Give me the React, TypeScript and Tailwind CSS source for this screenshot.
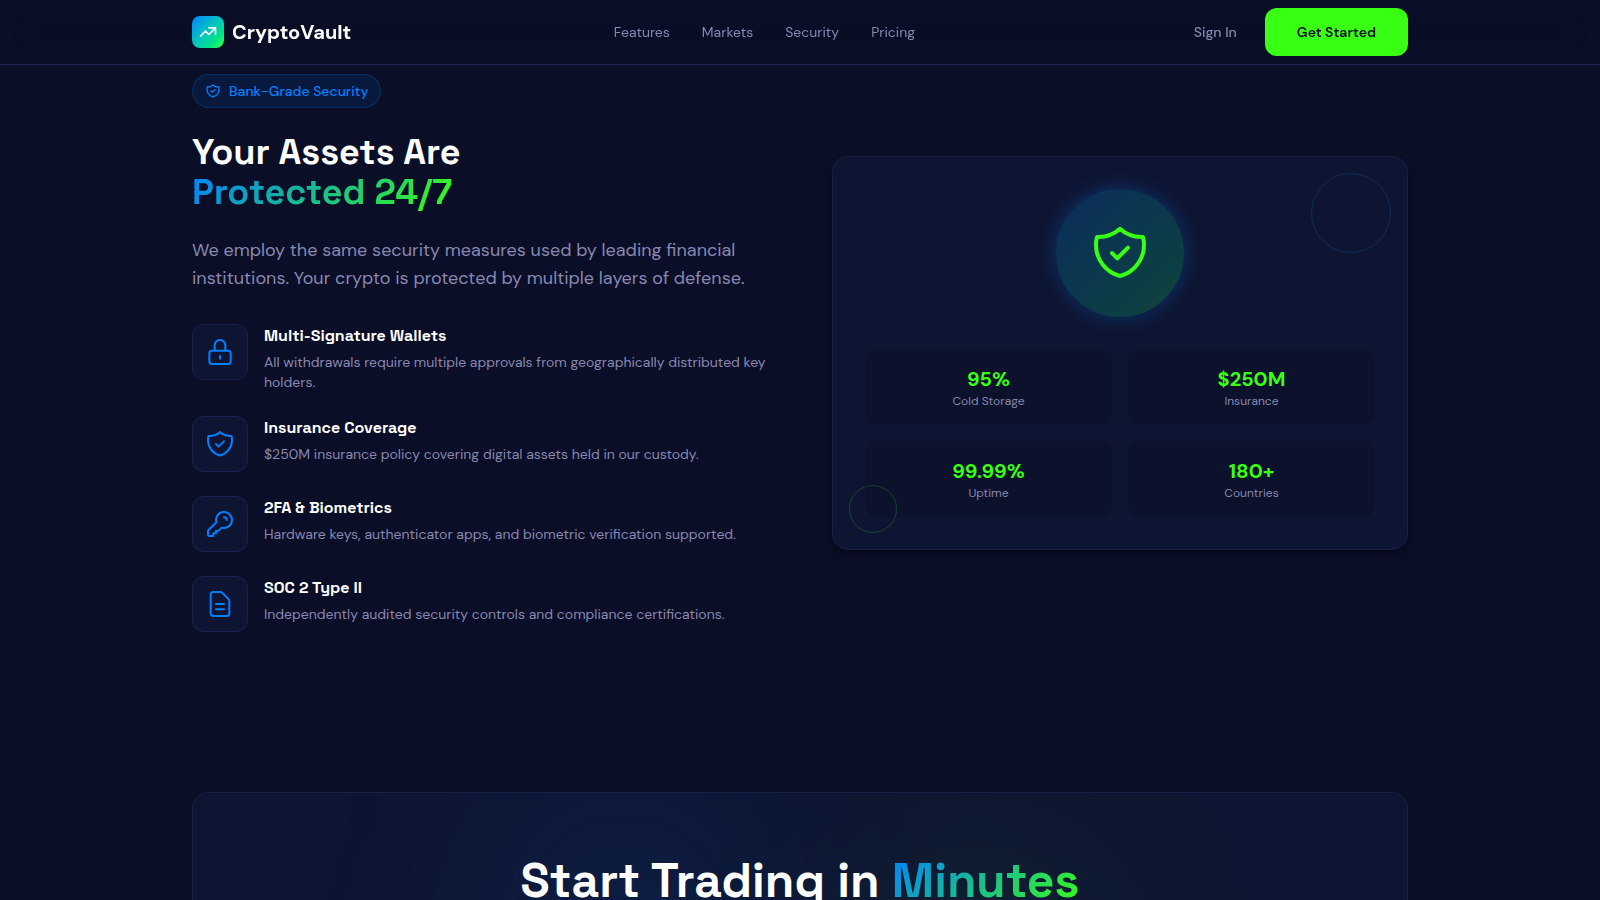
const icons = {
  trending: "M13 7h8m0 0v8m0-8l-8 8-4-4-6 6",
  lock: "M12 15v2m-6 4h12a2 2 0 002-2v-6a2 2 0 00-2-2H6a2 2 0 00-2 2v6a2 2 0 002 2zm10-10V7a4 4 0 00-8 0v4h8z",
  shield:
    "M9 12l2 2 4-4m5.618-4.016A11.955 11.955 0 0112 2.944a11.955 11.955 0 01-8.618 3.04A12.02 12.02 0 003 9c0 5.591 3.824 10.29 9 11.622 5.176-1.332 9-6.03 9-11.622 0-1.042-.133-2.052-.382-3.016z",
  key: "M15 7a2 2 0 012 2m4 0a6 6 0 01-7.743 5.743L11 17H9v2H7v2H4a1 1 0 01-1-1v-2.586a1 1 0 01.293-.707l5.964-5.964A6 6 0 1121 9z",
  document:
    "M9 12h6m-6 4h6m2 5H7a2 2 0 01-2-2V5a2 2 0 012-2h5.586a1 1 0 01.707.293l5.414 5.414a1 1 0 01.293.707V19a2 2 0 01-2 2z",
};

type IconName = keyof typeof icons;

function Icon({ name, className, strokeWidth = 2 }: { name: IconName; className: string; strokeWidth?: number }) {
  return (
    <svg className={className} fill="none" viewBox="0 0 24 24" stroke="currentColor" strokeWidth={strokeWidth} aria-hidden="true">
      <path strokeLinecap="round" strokeLinejoin="round" d={icons[name]} />
    </svg>
  );
}

const navLinks = ["Features", "Markets", "Security", "Pricing"];

const features: { icon: IconName; title: string; description: string }[] = [
  {
    icon: "lock",
    title: "Multi-Signature Wallets",
    description: "All withdrawals require multiple approvals from geographically distributed key holders.",
  },
  {
    icon: "shield",
    title: "Insurance Coverage",
    description: "$250M insurance policy covering digital assets held in our custody.",
  },
  {
    icon: "key",
    title: "2FA & Biometrics",
    description: "Hardware keys, authenticator apps, and biometric verification supported.",
  },
  {
    icon: "document",
    title: "SOC 2 Type II",
    description: "Independently audited security controls and compliance certifications.",
  },
];

const stats = [
  { value: "95%", label: "Cold Storage" },
  { value: "$250M", label: "Insurance" },
  { value: "99.99%", label: "Uptime" },
  { value: "180+", label: "Countries" },
];

function Header() {
  return (
    <header className="fixed inset-x-0 top-0 z-50 border-b border-[#1e2454] bg-[#0a0e27]/90 backdrop-blur-xl">
      <div className="max-w-7xl mx-auto px-8 h-16 flex items-center justify-between">
        <a href="#" className="flex items-center gap-2">
          <span className="w-8 h-8 rounded-lg bg-linear-to-br from-[#0080ff] to-[#39ff14] flex items-center justify-center">
            <Icon name="trending" className="w-5 h-5 text-white" />
          </span>
          <span className="text-xl font-bold text-white">CryptoVault</span>
        </a>

        <nav className="flex items-center gap-8">
          {navLinks.map((link) => (
            <a key={link} href={`#${link.toLowerCase()}`} className="text-sm text-[#8888b0] hover:text-white transition-colors">
              {link}
            </a>
          ))}
        </nav>

        <div className="flex items-center gap-3">
          <button type="button" className="px-4 py-2 text-sm font-medium text-[#8888b0] hover:text-white transition-colors">
            Sign In
          </button>
          <button type="button" className="h-12 px-8 rounded-xl bg-[#39ff14] text-sm font-semibold text-[#0a0e27]">
            Get Started
          </button>
        </div>
      </div>
    </header>
  );
}

function SecurityCard() {
  return (
    <div className="relative rounded-2xl border border-[#191f46] bg-[#0e1532] p-8 shadow-[0_4px_6px_rgba(0,0,0,0.3)]">
      <div className="w-32 h-32 mx-auto mb-8 rounded-full bg-linear-to-br from-[#0080ff]/20 to-[#39ff14]/20 shadow-[0_0_20px_rgba(0,128,255,0.3)] flex items-center justify-center">
        <Icon name="shield" className="w-16 h-16 text-[#39ff14]" strokeWidth={1.5} />
      </div>

      <dl className="grid grid-cols-2 gap-4">
        {stats.map((stat) => (
          <div key={stat.label} className="flex flex-col-reverse rounded-xl bg-[#0c112c] p-4 text-center">
            <dt className="text-xs text-[#8888b0]">{stat.label}</dt>
            <dd className="text-xl font-bold text-[#39ff14]">{stat.value}</dd>
          </div>
        ))}
      </dl>

      {/* Decorative rings */}
      <div className="absolute top-4 right-4 w-20 h-20 rounded-full border border-[#0080ff]/20"></div>
      <div className="absolute bottom-4 left-4 w-12 h-12 rounded-full border border-[#39ff14]/20"></div>
    </div>
  );
}

export default function App() {
  return (
    <div className="min-h-screen bg-[#0a0e27] font-['DM_Sans',Inter,sans-serif] text-white antialiased">
      <Header />

      <main className="max-w-7xl mx-auto px-8 pt-[74px] pb-20">
        <section id="security" className="grid grid-cols-2 gap-16 items-center pb-20">
          <div>
            <div className="inline-flex items-center gap-2 px-3 py-1.5 mb-6 rounded-full border border-[#0080ff]/20 bg-[#0080ff]/10 align-top text-sm font-medium text-[#0080ff]">
              <Icon name="shield" className="w-4 h-4" />
              Bank-Grade Security
            </div>

            <h2 className="mb-6 font-['Space_Grotesk',Inter,sans-serif] text-4xl font-bold">
              Your Assets Are
              <br />
              <span className="bg-[linear-gradient(135deg,#0080ff,#39ff14)] bg-clip-text text-transparent">Protected 24/7</span>
            </h2>

            <p className="mb-8 text-lg leading-7 text-[#8888b0]">
              We employ the same security measures used by leading financial institutions. Your crypto is protected by
              multiple layers of defense.
            </p>

            <ul className="space-y-6">
              {features.map((feature) => (
                <li key={feature.title} className="flex items-start gap-4">
                  <div className="w-14 h-14 shrink-0 rounded-xl border border-[#1c2250] bg-[#0e1532] flex items-center justify-center">
                    <Icon name={feature.icon} className="w-8 h-8 text-[#0080ff]" strokeWidth={1.5} />
                  </div>
                  <div>
                    <h3 className="mb-1 font-['Space_Grotesk',Inter,sans-serif] font-semibold">{feature.title}</h3>
                    <p className="text-sm text-[#8888b0]">{feature.description}</p>
                  </div>
                </li>
              ))}
            </ul>
          </div>

          <SecurityCard />
        </section>

        <section className="pt-20">
          <div className="relative overflow-hidden min-h-80 rounded-2xl border border-[#191f46] bg-[#0e1532] p-16 text-center">
            <div className="absolute top-0 left-1/4 w-64 h-64 rounded-full bg-[#0080ff]/12 blur-[96px]"></div>
            <div className="absolute bottom-0 right-1/4 w-64 h-64 rounded-full bg-[#39ff14]/8 blur-[96px]"></div>

            <h2 className="relative font-['Space_Grotesk',Inter,sans-serif] text-5xl font-bold">
              Start Trading in{" "}
              <span className="bg-[linear-gradient(135deg,#0080ff,#39ff14)] bg-clip-text text-transparent">Minutes</span>
            </h2>
          </div>
        </section>
      </main>
    </div>
  );
}
